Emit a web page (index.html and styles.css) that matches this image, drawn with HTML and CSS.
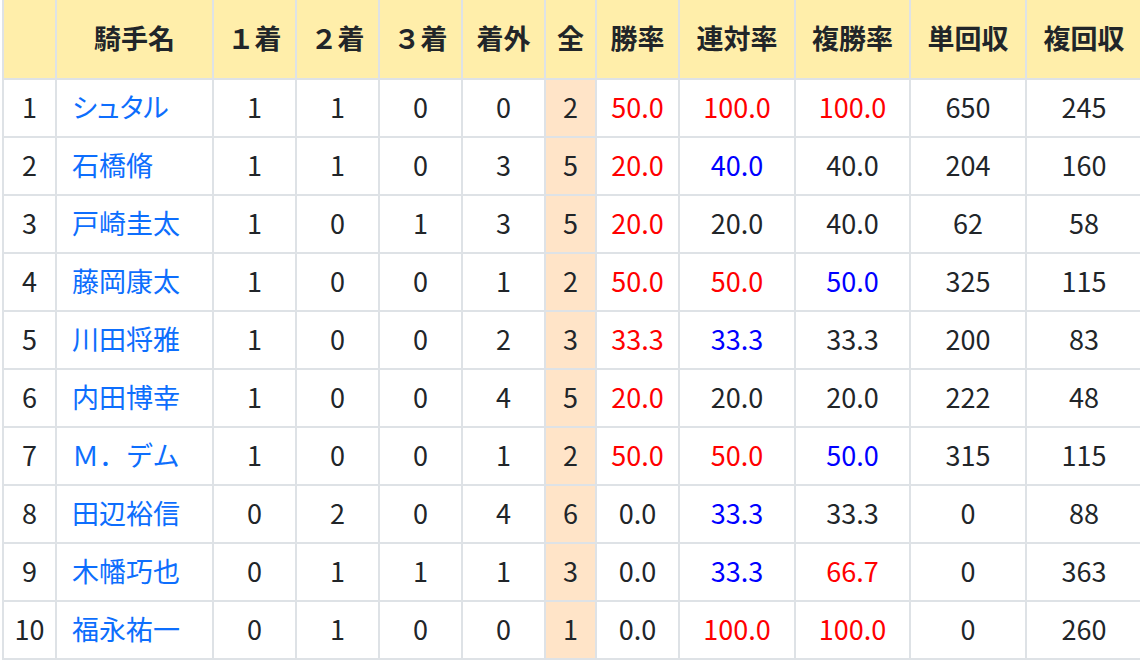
FILE: index.html
```html
<!DOCTYPE html>
<html lang="ja">
<head>
<meta charset="utf-8">
<title>騎手成績</title>
<link rel="stylesheet" href="styles.css">
</head>
<body>
<table class="stats">
  <colgroup>
    <col class="c-rank"><col class="c-name"><col class="c-n"><col class="c-n"><col class="c-n"><col class="c-n"><col class="c-all"><col class="c-n"><col class="c-w"><col class="c-w2"><col class="c-w"><col class="c-w">
  </colgroup>
  <thead>
    <tr>
      <th></th><th>騎手名</th><th>１着</th><th>２着</th><th>３着</th><th>着外</th><th>全</th><th>勝率</th><th>連対率</th><th>複勝率</th><th>単回収</th><th>複回収</th>
    </tr>
  </thead>
  <tbody>
    <tr><td>1</td><td class="name"><a href="#" class="kana">シュタル</a></td><td>1</td><td>1</td><td>0</td><td>0</td><td class="all">2</td><td class="red">50.0</td><td class="red">100.0</td><td class="red">100.0</td><td>650</td><td>245</td></tr>
    <tr><td>2</td><td class="name"><a href="#">石橋脩</a></td><td>1</td><td>1</td><td>0</td><td>3</td><td class="all">5</td><td class="red">20.0</td><td class="blue">40.0</td><td>40.0</td><td>204</td><td>160</td></tr>
    <tr><td>3</td><td class="name"><a href="#">戸崎圭太</a></td><td>1</td><td>0</td><td>1</td><td>3</td><td class="all">5</td><td class="red">20.0</td><td>20.0</td><td>40.0</td><td>62</td><td>58</td></tr>
    <tr><td>4</td><td class="name"><a href="#">藤岡康太</a></td><td>1</td><td>0</td><td>0</td><td>1</td><td class="all">2</td><td class="red">50.0</td><td class="red">50.0</td><td class="blue">50.0</td><td>325</td><td>115</td></tr>
    <tr><td>5</td><td class="name"><a href="#">川田将雅</a></td><td>1</td><td>0</td><td>0</td><td>2</td><td class="all">3</td><td class="red">33.3</td><td class="blue">33.3</td><td>33.3</td><td>200</td><td>83</td></tr>
    <tr><td>6</td><td class="name"><a href="#">内田博幸</a></td><td>1</td><td>0</td><td>0</td><td>4</td><td class="all">5</td><td class="red">20.0</td><td>20.0</td><td>20.0</td><td>222</td><td>48</td></tr>
    <tr><td>7</td><td class="name"><a href="#">Ｍ．デム</a></td><td>1</td><td>0</td><td>0</td><td>1</td><td class="all">2</td><td class="red">50.0</td><td class="red">50.0</td><td class="blue">50.0</td><td>315</td><td>115</td></tr>
    <tr><td>8</td><td class="name"><a href="#">田辺裕信</a></td><td>0</td><td>2</td><td>0</td><td>4</td><td class="all">6</td><td>0.0</td><td class="blue">33.3</td><td>33.3</td><td>0</td><td>88</td></tr>
    <tr><td>9</td><td class="name"><a href="#">木幡巧也</a></td><td>0</td><td>1</td><td>1</td><td>1</td><td class="all">3</td><td>0.0</td><td class="blue">33.3</td><td class="red">66.7</td><td>0</td><td>363</td></tr>
    <tr><td>10</td><td class="name"><a href="#">福永祐一</a></td><td>0</td><td>1</td><td>0</td><td>0</td><td class="all">1</td><td>0.0</td><td class="red">100.0</td><td class="red">100.0</td><td>0</td><td>260</td></tr>
  </tbody>
</table>
</body>
</html>
```

FILE: styles.css
```css
html, body {
  margin: 0;
  padding: 0;
  background: #ffffff;
  overflow: hidden;
}

body {
  font-family: "Noto Sans CJK JP", "Noto Sans", sans-serif;
  color: #212529;
  font-size: 27px;
}

.stats {
  border-collapse: collapse;
  table-layout: fixed;
  width: 1140px;
  margin: -2px 0 0 2px;
}

.c-rank { width: 53px; }
.c-name { width: 157px; }
.c-n { width: 83px; }
.c-all { width: 51px; }
.c-w { width: 116px; }
.c-w2 { width: 115px; }

.stats th,
.stats td {
  border: 2px solid #dee2e6;
  text-align: center;
  vertical-align: middle;
  padding: 0 0 3px 0;
  white-space: nowrap;
  overflow: hidden;
}

.stats thead th {
  background: #ffeeaa;
  font-weight: 700;
  height: 75px;
  border-top-color: #ffeeaa;
}

.stats tbody td {
  height: 53px;
}

.stats td.name {
  text-align: left;
  padding-left: 15px;
}

.stats td.name a {
  color: #0d6efd;
  text-decoration: none;
}

.stats td.name a.kana {
  font-feature-settings: "palt" 1;
}

.stats td.all {
  background: #ffe4c8;
}

.red { color: #ff0000; }
.blue { color: #0000ff; }
```
